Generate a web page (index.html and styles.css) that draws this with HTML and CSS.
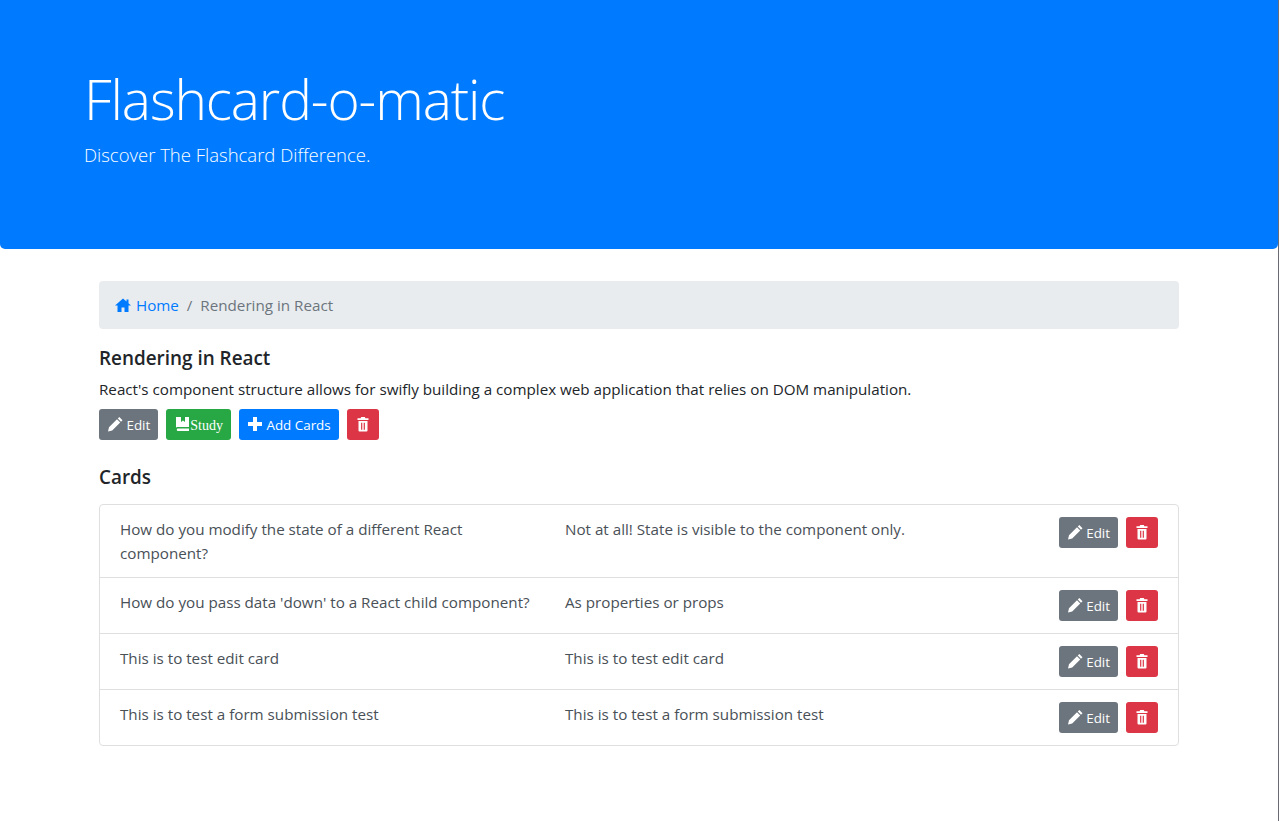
FILE: index.html
```html
<!DOCTYPE html>
<html>
<head>
  <title>Flashcard-o-matic</title>
  <link rel="stylesheet" href="styles.css">
</head>
<body>

  <svg class="icon-defs" width="0" height="0">
    <symbol id="i-home" viewBox="0 0 16 16"><path d="M8 1.500 0 8.500h2.500V15h4v-4.500h3V15h4V8.500H16l-2.500-2.200V2.500h-2v2z"/></symbol>
    <symbol id="i-pencil" viewBox="0 0 16 16"><path d="M12.300 1 15.500 4.200 14 5.700 10.800 2.500zM10 3.300l3.200 3.200-8 8-4.200 1 1-4.200z"/></symbol>
    <symbol id="i-book" viewBox="0 0 16 16"><path d="M2 1h5v5l2-1.500L11 6V1h4v10H4a2 2 0 0 0-2 .5zM4 12.500h11V15H4a1.250 1.250 0 0 1 0-2.500z"/></symbol>
    <symbol id="i-plus" viewBox="0 0 16 16"><path d="M6 1h4v5h5v4h-5v5H6v-5H1V6h5z"/></symbol>
    <symbol id="i-trash" viewBox="0 0 16 16"><path d="M6.200 1h3.600l.6 1.200h3.100V4H2.500V2.200h3.100zM3.500 5h9v9.500a1 1 0 0 1-1 1h-7a1 1 0 0 1-1-1zm2.600 1.800v7h1.200v-7zm2.600 0v7h1.200v-7z"/></symbol>
  </svg>

  <div class="jumbotron">
    <h1>Flashcard-o-matic</h1>
    <p>Discover The Flashcard Difference.</p>
  </div>

  <div class="container">
    <nav class="breadcrumb">
      <a href="#"><svg class="icon home-icon"><use href="#i-home"/></svg> Home</a>
      <span class="sep">/</span>
      <span class="current">Rendering in React</span>
    </nav>

    <h5>Rendering in React</h5>
    <p class="deck-text">React's component structure allows for swifly building a complex web application that relies on DOM manipulation.</p>

    <div class="deck-actions">
      <button class="btn btn-grey"><svg class="icon"><use href="#i-pencil"/></svg> Edit</button>
      <button class="btn btn-green"><svg class="icon"><use href="#i-book"/></svg><span class="study">Study</span></button>
      <button class="btn btn-blue"><svg class="icon"><use href="#i-plus"/></svg> Add Cards</button>
      <button class="btn btn-red"><svg class="icon"><use href="#i-trash"/></svg></button>
    </div>

    <h5 class="cards-title">Cards</h5>

    <ul class="card-list">
      <li class="card-row">
        <div class="front">How do you modify the state of a different React component?</div>
        <div class="back">Not at all! State is visible to the component only.</div>
        <div class="row-actions">
          <button class="btn btn-grey"><svg class="icon"><use href="#i-pencil"/></svg> Edit</button>
          <button class="btn btn-red"><svg class="icon"><use href="#i-trash"/></svg></button>
        </div>
      </li>
      <li class="card-row">
        <div class="front">How do you pass data 'down' to a React child component?</div>
        <div class="back">As properties or props</div>
        <div class="row-actions">
          <button class="btn btn-grey"><svg class="icon"><use href="#i-pencil"/></svg> Edit</button>
          <button class="btn btn-red"><svg class="icon"><use href="#i-trash"/></svg></button>
        </div>
      </li>
      <li class="card-row">
        <div class="front">This is to test edit card</div>
        <div class="back">This is to test edit card</div>
        <div class="row-actions">
          <button class="btn btn-grey"><svg class="icon"><use href="#i-pencil"/></svg> Edit</button>
          <button class="btn btn-red"><svg class="icon"><use href="#i-trash"/></svg></button>
        </div>
      </li>
      <li class="card-row">
        <div class="front">This is to test a form submission test</div>
        <div class="back">This is to test a form submission test</div>
        <div class="row-actions">
          <button class="btn btn-grey"><svg class="icon"><use href="#i-pencil"/></svg> Edit</button>
          <button class="btn btn-red"><svg class="icon"><use href="#i-trash"/></svg></button>
        </div>
      </li>
    </ul>
  </div>

</body>
</html>
```

FILE: styles.css
```css
html, body {
  height: 100%;
}

body {
  margin: 0;
  height: 821px;
  overflow: hidden;
  box-sizing: border-box;
  border-right: 1px solid #6b6b76;
  background: #fff;
  color: #212529;
  font-family: "Open Sans", "Noto Sans", sans-serif;
  font-size: 15.2px;
  line-height: 24px;
}

.icon-defs {
  position: absolute;
}

.icon {
  width: 16px;
  height: 16px;
  fill: currentColor;
  vertical-align: -2px;
}

.home-icon {
  margin-right: 1px;
}

.jumbotron {
  box-sizing: border-box;
  height: 249px;
  padding: 63px 84px 0;
  background: #007bff;
  color: #fff;
  border-radius: 0 0 5px 5px;
}

.jumbotron h1 {
  margin: 0 0 8px;
  font-size: 55px;
  font-weight: 300;
  line-height: 72px;
  letter-spacing: -1.1px;
}

.jumbotron p {
  margin: 0;
  font-size: 18.500px;
  font-weight: 300;
  line-height: 24px;
}

.container {
  width: 1080px;
  margin: 32px 0 0 99px;
}

.breadcrumb {
  box-sizing: border-box;
  height: 48px;
  padding: 12px 16px;
  background: #e9ecef;
  border-radius: 4px;
  color: #6c757d;
}

.breadcrumb a {
  color: #007bff;
  text-decoration: none;
}

.sep {
  margin: 0 4px;
}

h5 {
  margin: 17px 0 7px;
  font-size: 18.900px;
  font-weight: 600;
  line-height: 24px;
}

.deck-text {
  margin: 0 0 8px;
  color: #212529;
}

.deck-actions {
  display: flex;
  gap: 8px;
}

.btn {
  height: 31px;
  padding: 1px 8px 0;
  border: none;
  border-radius: 3px;
  color: #fff;
  font-family: inherit;
  font-size: 13.400px;
  line-height: 30px;
}

.btn-grey {
  background: #6c757d;
}

.btn-green {
  background: #28a745;
}

.btn-blue {
  background: #007bff;
}

.btn-red {
  background: #dc3545;
}

.study {
  font-family: "Liberation Serif", serif;
  font-size: 14px;
}

.cards-title {
  margin: 25px 0 15px;
}

.card-list {
  margin: 0;
  padding: 0;
  list-style: none;
  border: 1px solid #dfdfdf;
  border-radius: 4px;
  color: #495057;
}

.card-row {
  display: flex;
  padding: 12px 20px;
  border-top: 1px solid #dfdfdf;
}

.card-row:first-child {
  border-top: none;
}

.front {
  width: 445px;
  padding-right: 20px;
  box-sizing: border-box;
}

.back {
  flex: 1;
}

.row-actions {
  display: flex;
  gap: 8px;
}
```
